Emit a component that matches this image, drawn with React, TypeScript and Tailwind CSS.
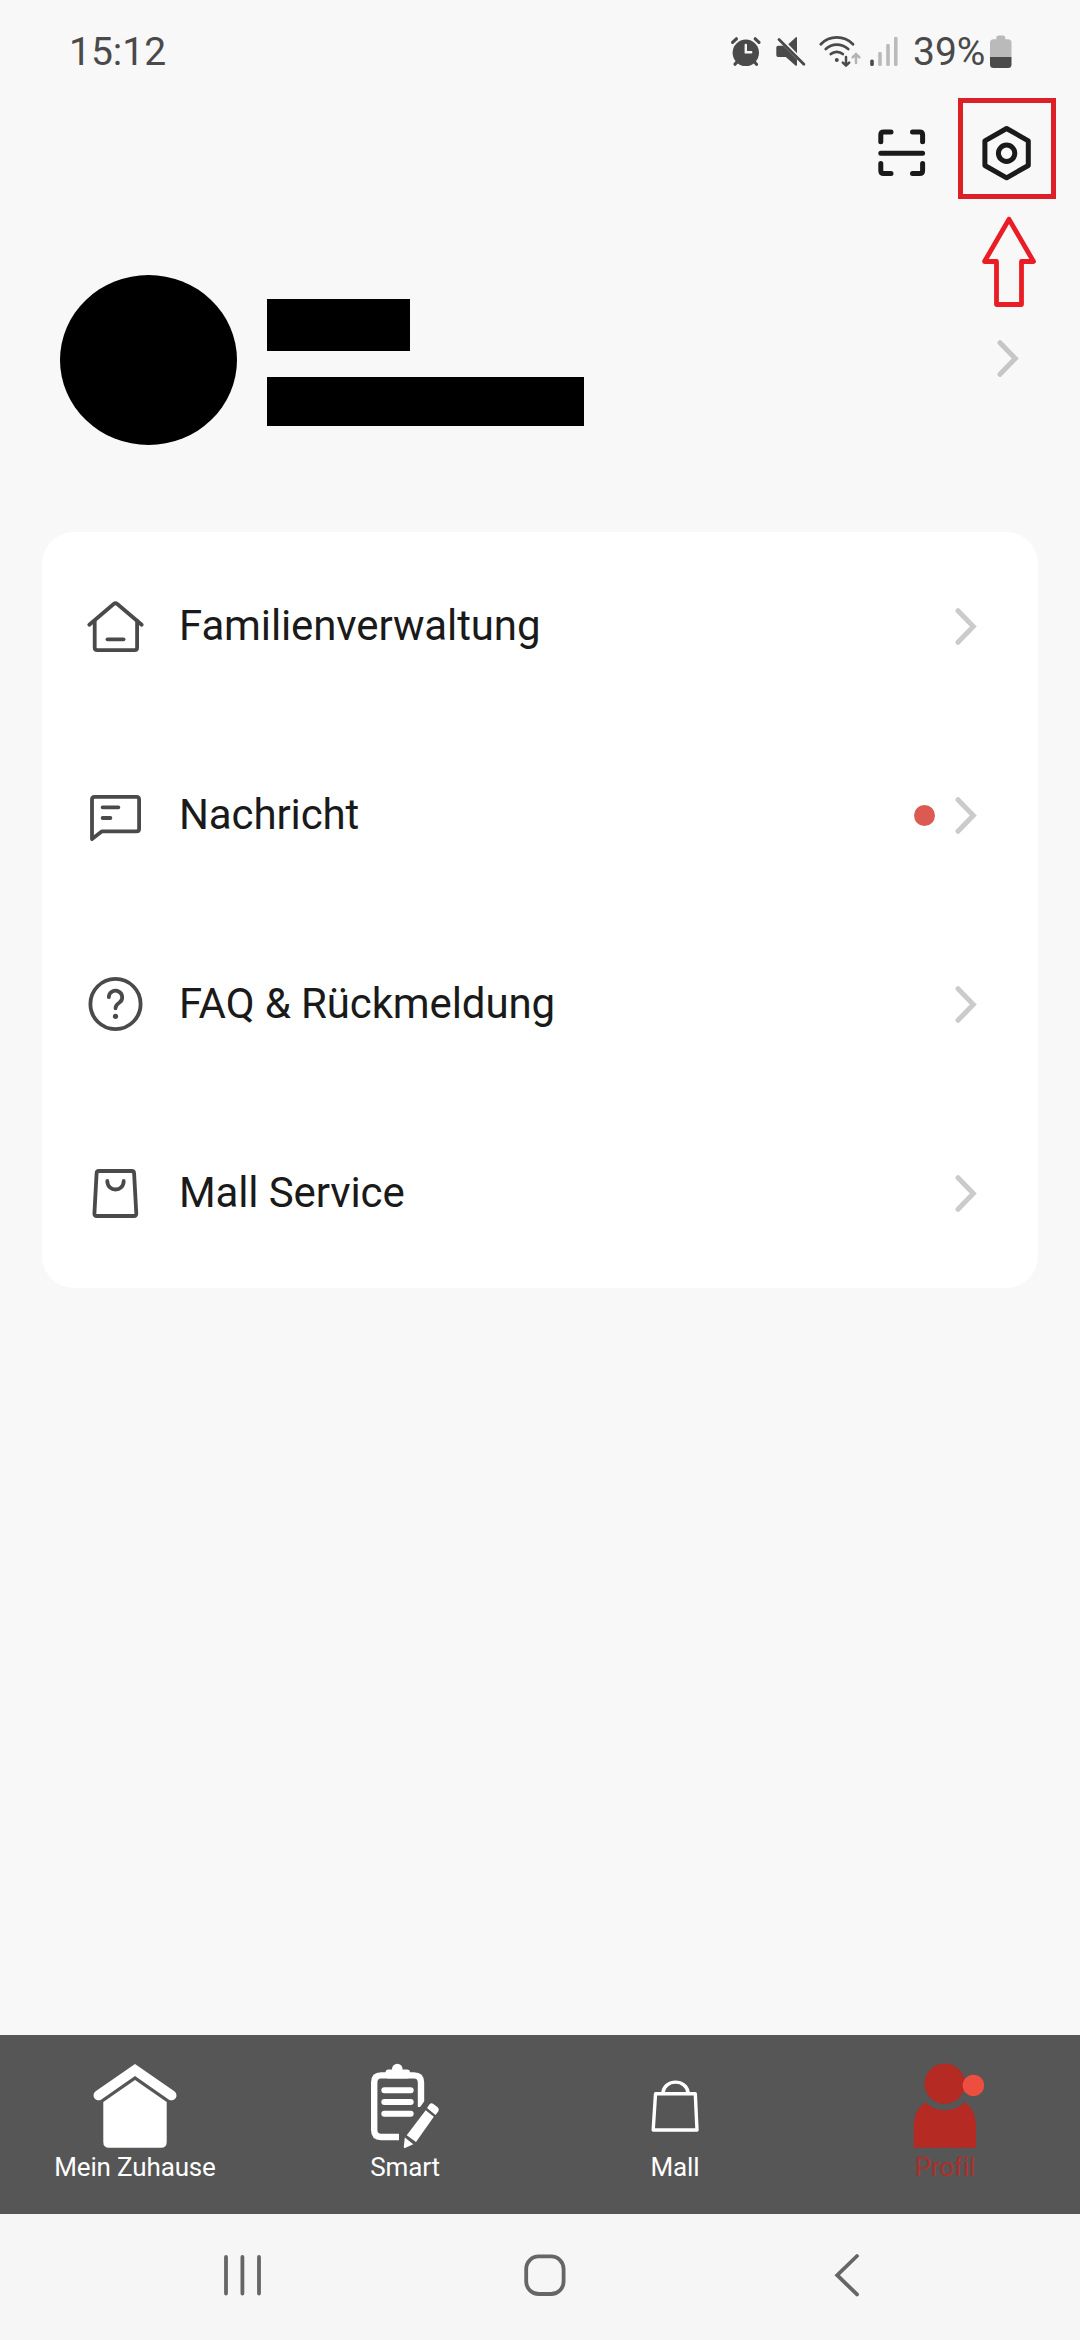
import React from "react";

function StatusBar() {
    return (
        <div className="flex h-[102px] items-center justify-between pl-[69px] pr-[67px] text-[39px] leading-[46px] text-[#4a4a4a]">
            <span className="pt-[2px]">15:12</span>
            <div className="flex items-center">
                {/* Alarm */}
                <svg width="32" height="34" viewBox="0 -1 32 34" className="mr-[13px]" fill="none" strokeLinecap="round">
                    <circle cx="15.8" cy="17.8" r="13.2" fill="#4a4a4a" />
                    <path d="M2.6 7.4 6.4 3.8M25.2 3.8 29 7.4M5 29.2 8 26M26.5 29.2 23.6 26" stroke="#4a4a4a" strokeWidth="3.2" />
                    <path d="M15.8 10V17.2H21.2" stroke="#f8f8f8" strokeWidth="2.4" />
                </svg>
                {/* Muted */}
                <svg width="32" height="34" viewBox="0 -1 32 34" className="mr-[11px]" fill="#4a4a4a">
                    <path d="M20.6 2.4Q22 1.4 22 3V18.2L13.3 9.3Z" />
                    <path d="M3 10.7H8.3L22 24.4V29.6Q22 31.6 20.4 30.4L10.8 21.9H3Q1.3 21.9 1.3 20.2V12.4Q1.3 10.7 3 10.7Z" />
                    <path d="M4 4.4 28.9 29.3" stroke="#4a4a4a" strokeWidth="2.8" strokeLinecap="round" />
                </svg>
                {/* Wifi */}
                <svg width="45" height="36" viewBox="0 0 45 36" className="mr-[6px]" fill="none" stroke="#4a4a4a" strokeWidth="2.8" strokeLinecap="round">
                    <path d="M2.8 11.2Q9.5 4.4 18.8 4.4T35 11.2" />
                    <path d="M7.8 16Q12.4 11.6 18.8 11.6T30.2 16" />
                    <path d="M12.8 21Q15.4 18.8 18.8 18.8T24.8 21" />
                    <circle cx="18.8" cy="27" r="2" fill="#4a4a4a" stroke="none" />
                    <path d="M28 24V32.4M24.8 29.6 28 32.6 31.2 29.6" strokeWidth="2.5" />
                    <path d="M38 30V21M34.6 24.4 38 21 41.4 24.4" stroke="#b4b4b4" strokeWidth="2.5" />
                </svg>
                {/* Signal */}
                <svg width="30" height="34" viewBox="0 -1 30 34" className="mr-[14px]">
                    <rect x="1.2" y="24.4" width="3.6" height="6.6" rx="1.6" fill="#4a4a4a" />
                    <g fill="#bababa">
                        <rect x="9.2" y="16.8" width="3.6" height="14.2" rx="1.6" />
                        <rect x="17.2" y="8.8" width="3.6" height="22.2" rx="1.6" />
                        <rect x="25" y="1.8" width="3.6" height="29.2" rx="1.6" />
                    </g>
                </svg>
                <span className="mr-[5px] w-[72px] whitespace-nowrap pt-[2px]">39%</span>
                {/* Battery */}
                <svg width="23" height="34" viewBox="0 -1 23 34">
                    <path d="M6.3 4.3V3Q6.3.6 8.6.6H13Q15.3.6 15.3 3V4.3H18Q21.5 4.3 21.5 8V22.3H0V8Q0 4.3 3.5 4.3Z" fill="#bababa" />
                    <path d="M0 22H21.5V29.5Q21.5 33 18 33H3.5Q0 33 0 29.5Z" fill="#4a4a4a" />
                </svg>
            </div>
        </div>
    );
}

function Chevron({ color = "#cbcbcb" }: { color?: string }) {
    return (
        <svg width="22" height="37" viewBox="0 0 22 37" fill="none" stroke={color} strokeWidth="5" strokeLinecap="round">
            <path d="M3 2.7 18.3 18.5 3 34.3" />
        </svg>
    );
}

const menu = [
    {
        label: "Familienverwaltung",
        icon: (
            <>
                <path d="M4.3 28.2 28.7 7.5Q30.5 6.1 32.3 7.5L56.7 28.2" />
                <path d="M9.7 24.5V51Q9.7 53.6 12.3 53.6H49.5Q52.1 53.6 52.1 51V24.5" />
                <path d="M22.5 42.8H38.5" />
            </>
        ),
    },
    {
        label: "Nachricht",
        dot: true,
        icon: (
            <>
                <path d="M7 53.5V14Q7 11.4 9.6 11.4H51.5Q54.1 11.4 54.1 14V43.2Q54.1 45.8 51.5 45.8H17Z" />
                <path d="M17.6 21.8H33.4M17.6 32.5H25.4" />
            </>
        ),
    },
    {
        label: "FAQ & Rückmeldung",
        icon: (
            <>
                <circle cx="30.5" cy="29.5" r="25.1" />
                <path d="M23.8 22.6A6.7 6.5 0 1 1 34.4 28Q30.5 30.6 30.5 33.8" />
                <circle cx="30.5" cy="41.8" r="2.6" fill="#4a4a4a" stroke="none" />
            </>
        ),
    },
    {
        label: "Mall Service",
        icon: (
            <>
                <path d="M14 7.5H46.7Q49 7.5 49.1 9.8L51.3 50.1Q51.4 52.5 49 52.5H11.7Q9.3 52.5 9.4 50.1L11.6 9.8Q11.7 7.5 14 7.5Z" />
                <path d="M22.3 17.5C22.3 28.8 38.7 28.8 38.7 17.5" />
            </>
        ),
    },
];

const tabs = [
    {
        label: "Mein Zuhause",
        icon: (
            <>
                <path d="M8.5 32.3 45 7 81.5 32.3" fill="none" stroke="#fff" strokeWidth="10" strokeLinecap="round" />
                <path d="M45 17 76.7 39V79Q76.7 84.8 71 84.8H19Q13.3 84.8 13.3 79V39Z" fill="#fff" />
            </>
        ),
    },
    {
        label: "Smart",
        icon: (
            <>
                <path d="M39 74H21Q14.2 74 14.2 67V19.5Q14.2 12.4 21 12.4H54Q61 12.4 61 19.5V44" fill="none" stroke="#fff" strokeWidth="6.4" />
                <circle cx="37.3" cy="6" r="5.3" fill="#fff" />
                <rect x="25.5" y="6.4" width="24.5" height="9" rx="3" fill="#fff" />
                <path d="M24.3 27.3H50.7M24.3 39H50.7M24.3 50.7H50.7" stroke="#fff" strokeWidth="6" strokeLinecap="round" />
                <path d="M64.5 38 81 48 59 88 40 78 42 70 57.5 47.5Z" fill="#565656" />
                <path d="M65.7 47.2 73.8 53.8 56 79 46.7 72.3Z" fill="#fff" />
                <path d="M44.8 74.6 53.3 81.3 45 85Q43.8 85.4 43.8 84Z" fill="#fff" />
                <path d="M67 45 69 42Q70.6 39.2 73.4 41L77 43.8Q79.8 46 78.2 48.4L75.5 52Z" fill="#fff" />
            </>
        ),
    },
    {
        label: "Mall",
        icon: (
            <g fill="none" stroke="#fff" strokeWidth="3.4" strokeLinejoin="round">
                <path d="M25.5 30.8H65.3L67 67H23.2Z" />
                <path d="M32.8 30C34.5 15.5 56.5 15.5 58.2 30" />
            </g>
        ),
    },
    {
        label: "Profil",
        active: true,
        icon: (
            <>
                <circle cx="44.7" cy="20.7" r="20.2" fill="#b52a22" />
                <path d="M25.3 39.3Q33.5 47.3 44.7 47.3T65 39.3Q76 47.5 76 62V84.8H13.7V62Q13.7 47.5 25.3 39.3Z" fill="#b52a22" />
                <circle cx="73.4" cy="22.4" r="10.7" fill="#ee4e3f" />
            </>
        ),
    },
];

export default function App() {
    return (
        <div className="relative flex h-[2340px] w-[1080px] flex-col overflow-hidden bg-[#f8f8f8] font-['Roboto',sans-serif]">
            <StatusBar />

            {/* Header actions */}
            <div className="flex h-[102px] items-center justify-end gap-[56px] pr-[48px]">
                <svg width="48" height="48" viewBox="0 0 48 48" fill="none" stroke="#1a1a1a" strokeWidth="5" strokeLinecap="round">
                    <path d="M2.8 12.8V5.8Q2.8 2.9 5.8 2.9H13M34.5 2.9H41.6Q44.6 2.9 44.6 5.8V12.8M2.8 34.5V41.5Q2.8 44.6 5.8 44.6H13M34.5 44.6H41.6Q44.6 44.6 44.6 41.5V34.5M2.8 24.2H44.6" />
                </svg>
                <svg width="50" height="56" viewBox="0 0 50 56" fill="none" stroke="#1a1a1a" strokeWidth="5" strokeLinejoin="round">
                    <path d="M24.6 3.5 46.3 15.8V40.5L24.6 52.8 2.9 40.5V15.8Z" />
                    <circle cx="24.6" cy="28.2" r="8.2" />
                </svg>
            </div>

            {/* Profile */}
            <div className="mt-[71px] flex h-[170px] pl-[60px] pr-[61px]">
                <div className="h-[170px] w-[177px] rounded-[50%] bg-black" />
                <div className="ml-[30px] mt-6 flex flex-1 flex-col gap-[26px]">
                    <div className="h-[52px] w-[143px] bg-black" />
                    <div className="h-[49px] w-[317px] bg-black" />
                </div>
                <div className="flex items-center pb-[3px]">
                    <Chevron color="#c6c6c6" />
                </div>
            </div>

            {/* Menu */}
            <div className="mx-[42px] mt-[87px] rounded-[32px] bg-white">
                {menu.map((item) => (
                    <div key={item.label} className="flex h-[189px] items-center pl-[43px] pr-[61px]">
                        <svg width="60" height="61" viewBox="0 -0.5 60 61" fill="none" stroke="#4a4a4a" strokeWidth="3.8" strokeLinecap="round" strokeLinejoin="round">
                            {item.icon}
                        </svg>
                        <span className="ml-[34px] flex-1 pb-[2px] text-[42px] tracking-[-0.12px] text-[#1a1a1a]">{item.label}</span>
                        {item.dot && <span className="mr-5 size-[21px] rounded-full bg-[#db5a52]" />}
                        <Chevron />
                    </div>
                ))}
            </div>

            {/* Tab bar */}
            <div className="mt-auto grid h-[179px] grid-cols-4 bg-[#565656] pt-[28px]">
                {tabs.map((tab) => (
                    <div key={tab.label} className="flex flex-col items-center">
                        <svg width="90" height="86" viewBox="0 0 90 86">
                            {tab.icon}
                        </svg>
                        <span className={`mt-[3px] text-[26px] leading-[30px] tracking-[-0.15px] ${tab.active ? "text-[#ab302b]" : "text-white"}`}>
                            {tab.label}
                        </span>
                    </div>
                ))}
            </div>

            {/* System navigation */}
            <div className="flex h-[126px] items-center justify-between bg-[#f6f6f6] pb-[4px] pl-[218px] pr-[209px]">
                <svg width="48" height="48" viewBox="0 0 48 48" stroke="#666" strokeWidth="3.8" strokeLinecap="round">
                    <path d="M8 6V42.5M24.4 6V42.5M41 6V42.5" />
                </svg>
                <svg width="48" height="48" viewBox="0 0 48 48" fill="none" stroke="#666" strokeWidth="3.8">
                    <rect x="5.2" y="5.4" width="37.4" height="37.6" rx="12.5" />
                </svg>
                <svg width="48" height="48" viewBox="0 0 48 48" fill="none" stroke="#666" strokeWidth="3.8" strokeLinecap="round">
                    <path d="M34 5 14.2 24.2 34 43.4" />
                </svg>
            </div>

            {/* Callout around the settings button */}
            <div className="absolute left-[958px] top-[98px] h-[101px] w-[98px] border-[5px] border-[#dd2028]" />
            <svg width="56" height="92" viewBox="0 0 56 92" className="absolute left-[981px] top-[216px]" fill="none" stroke="#ea1c24" strokeWidth="4.8" strokeLinejoin="round">
                <path d="M28 3.2 52.5 45.5H40.5V88.5H15.5V45.5H3.5Z" />
            </svg>
        </div>
    );
}
